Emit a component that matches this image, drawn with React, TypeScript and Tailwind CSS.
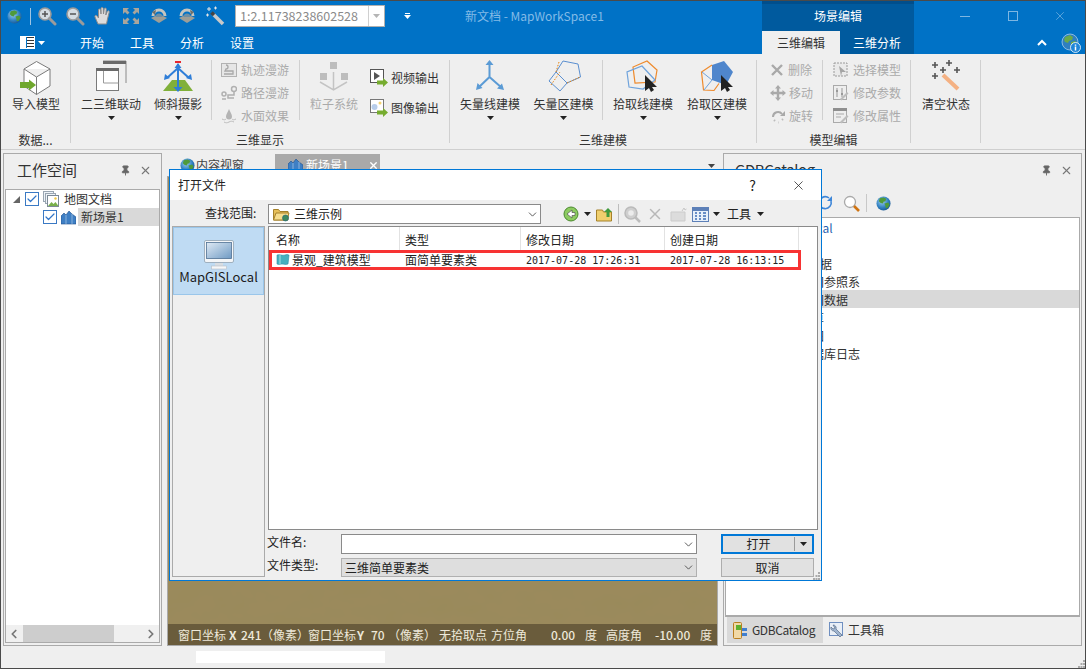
import { Check, ChevronDown, ChevronLeft, ChevronRight, Pin, X } from "lucide-react"
import type { ReactNode } from "react"

const Globe = ({ size = 16, id = "g" }: { size?: number; id?: string }) => (
	<svg width={size} height={size} viewBox="0 0 16 16" className="shrink-0">
		<defs>
			<radialGradient id={id} cx="0.4" cy="0.35" r="0.75">
				<stop offset="0" stopColor="#9fd0f0" />
				<stop offset="0.6" stopColor="#2f7fc0" />
				<stop offset="1" stopColor="#164f86" />
			</radialGradient>
		</defs>
		<circle cx="8" cy="8" r="7.5" fill={`url(#${id})`} />
		<path d="M4 2.5 8 1.5l3 1.5-1 2.5-2 .5-.5 2-2.5-.5-2-2zM9 8l4-1 1.5 2-2 3.5-2 .5-.5-2.5z" fill="#4f9a3a" />
	</svg>
)

const InfoGlobe = () => (
	<svg width="20" height="20" viewBox="0 0 20 20" className="shrink-0">
		<circle cx="9" cy="9" r="8" fill="#2f7fc0" stroke="#d5e6f3" strokeWidth=".6" />
		<path d="M4 4 9 2l3 2-1 3-3 1-1 2-3-1-1-2zM10 9l4-1 2 2-2 3-3 1-1-3z" fill="#6aa84a" />
		<circle cx="14.500" cy="14.500" r="5" fill="#1f86d8" stroke="#fff" strokeWidth=".8" />
		<path d="M14.500 11.500v1.200M14.500 13.500v4" stroke="#fff" strokeWidth="1.500" />
	</svg>
)

const Lens = ({ sign }: { sign: "+" | "-" }) => (
	<svg width="20" height="20" viewBox="0 0 20 20">
		<circle cx="8" cy="8" r="6" fill="#d5dde2" stroke="#9a9a9a" strokeWidth="1.600" />
		<path d="M12.500 12.500 18 18" stroke="#9b9b9b" strokeWidth="3" strokeLinecap="round" />
		<path d={sign === "+" ? "M5 8h6M8 5v6" : "M5 8h6"} stroke="#555" strokeWidth="1.500" />
	</svg>
)

const HandIcon = () => (
	<svg width="20" height="20" viewBox="0 0 20 20">
		<path d="M5 18 2 11c-.6-1.500 1-2.300 2-1l1.500 2V4c0-1.500 2-1.500 2.200 0l.3 4V2.500c0-1.500 2.200-1.500 2.300 0L10.500 8l.7-5c.2-1.400 2.200-1.200 2.100.3L12.800 9l1.500-3.500c.6-1.300 2.300-.7 1.900.7L14.500 13l-1 5z" fill="#dcdcdc" stroke="#8b8b8b" strokeWidth="1" />
	</svg>
)

const ExtentIcon = () => (
	<svg width="16" height="16" viewBox="0 0 16 16" fill="#a9a59c">
		<path d="M0 0h6L4 2l2.500 2.500-2 2L2 4 0 6zM16 0v6l-2-2-2.500 2.500-2-2L12 2l-2-2zM0 16v-6l2 2 2.500-2.500 2 2L4 14l2 2zM16 16h-6l2-2-2.500-2.500 2-2L14 12l2-2z" />
	</svg>
)

const OrbitIcon = ({ flip = false }: { flip?: boolean }) => (
	<svg width="20" height="20" viewBox="0 0 20 20">
		<path d="M2 12 10 8l8 4-8 5z" fill="#9e9e96" />
		<path d="M4 10a6 6 0 0 1 12 0" fill="none" stroke="#c5c5c0" strokeWidth="3" />
		<path d={flip ? "M13 4l4 2-3 3z" : "M7 4 3 6l3 3z"} fill="#6f6f6a" />
		<path d="M6.500 11a3.500 3.500 0 0 1 7 0" fill="#6f8ea3" />
	</svg>
)

const WandIcon = () => (
	<svg width="20" height="20" viewBox="0 0 20 20">
		<path d="M8 8l10 10" stroke="#c9c9c9" strokeWidth="3.500" />
		<path d="M6.500 6.500 9 9" stroke="#444" strokeWidth="3.500" />
		<path d="M2 3h4M4 1v4M9 2h3M10.500.5v3M1 9h3M2.500 7.500v3" stroke="#e6e6e6" strokeWidth="1" />
	</svg>
)

const Caret = ({ cls = "" }: { cls?: string }) => (
	<svg width="7" height="4" viewBox="0 0 7 4" className={`shrink-0 ${cls}`}>
		<path d="M0 0h7L3.500 4z" fill="currentColor" />
	</svg>
)

const Cube = () => (
	<svg width="44" height="36" viewBox="15 60 44 36">
		<path d="M37.500 61.500 51 69v17l-13.500 8.500L25 86V69z M25 69l12.500 8L51 69 M37.500 77v17.500" fill="#fff" stroke="#7a7a7a" strokeWidth="1" />
		<path d="M21 82h9v-2.500l7 5.500-7 5.500V88h-9z" fill="#6fa72d" />
	</svg>
)

const LinkWindows = () => (
	<svg width="34" height="36" viewBox="94 60 34 36">
		<path d="M103 61h23v22" fill="none" stroke="#8a8a8a" />
		<path d="M103 61h23v3h-23z" fill="#6a6a6a" />
		<rect x="96.500" y="68.500" width="22" height="22" fill="#fff" stroke="#7a7a7a" />
		<path d="M96 68h23v3H96z" fill="#6a6a6a" />
		<path d="M103.500 71v12h15" fill="none" stroke="#9a9a9a" />
	</svg>
)

const Oblique = () => (
	<svg width="36" height="36" viewBox="160 60 36 36">
		<path d="M172 80h13l8 11h-30z" fill="#80b03a" />
		<path d="M175 61h6v2h-6z" fill="#e8262e" />
		<path d="M178 64v25M178 68l-11 10M178 68l11 10" stroke="#2f7ed8" strokeWidth="2" fill="none" />
		<path d="M178 63l-3.500 5h7zM178 92l-4.500-5h9zM164 80l1-6 5 4zM192 80l-1-6-5 4z" fill="#2f7ed8" />
	</svg>
)

const Particles = () => (
	<svg width="40" height="36" viewBox="314 60 40 36" fill="#bdbdbd">
		<rect x="330" y="62" width="7" height="7" />
		<rect x="320" y="73" width="7" height="7" />
		<rect x="341" y="73" width="7" height="7" />
		<path d="M333.500 72v17M320 82l13.500 8 13.500-8" fill="none" stroke="#c4c4c4" strokeWidth="1.500" />
	</svg>
)

const VectorLine = () => (
	<svg width="34" height="36" viewBox="474 60 34 36">
		<path d="M490.500 63v14L479 88M490.500 77 503 88" fill="none" stroke="#5b9bd5" strokeWidth="2" />
		<path d="M490.500 60l-4 5h8zM477 90l1.500-7 5 5zM505 90l-7-1.500 5-5z" fill="#5b9bd5" />
	</svg>
)

const VectorArea = () => (
	<svg width="38" height="36" viewBox="545 60 38 36" fill="none">
		<path d="M563 61l15 3 2.500 13-13.500 6-11-11z" stroke="#5b8fd0" />
		<path d="M556 72l-7 9 11 10 7-8" stroke="#5b8fd0" />
		<path d="M559 62l-3 10 M567 83l13-6 M551 85l9-13" stroke="#e8820c" strokeDasharray="1.500 1.500" />
	</svg>
)

const PickLine = () => (
	<svg width="36" height="36" viewBox="627 60 36 36" fill="none">
		<path d="M649 61l10 9-2 12-20 1-2-16z" stroke="#ee8a2c" strokeWidth="1.200" />
		<path d="M644 66l13 14-12 9-14-2-2-15z" stroke="#6fa3dc" strokeWidth="1.200" />
		<path d="M647 75l12 12h-5l2 3-3 2-2-4-4 3z" fill="#222" />
	</svg>
)

const PickArea = () => (
	<svg width="36" height="36" viewBox="699 60 36 36" fill="none">
		<path d="M712 65l12-4 9 11-7 13-14-5z" fill="#4f86cc" />
		<path d="M712 65l-10.500 7 2 18 10.500.5 5-7" stroke="#ee8a2c" strokeWidth="1.200" />
		<path d="M702 72l10 8 -8 10" stroke="#6fa3dc" strokeWidth="1" />
		<path d="M721 75l12 12h-5l2 3-3 2-2-4-4 3z" fill="#222" />
	</svg>
)

const ClearWand = () => (
	<svg width="36" height="36" viewBox="928 60 36 36">
		<path d="M943 75l15 14" stroke="#f4b183" strokeWidth="4" />
		<path d="M932 65h6M935 62v6M946 63h6M949 60v6M940 70h6M943 67v6M954 70h6M957 67v6M932 76h6M935 73v6" stroke="#555" strokeWidth="1.600" />
	</svg>
)

const GrayMap = () => (
	<svg width="16" height="16" viewBox="0 0 16 16">
		<rect x=".5" y="1.500" width="15" height="13" fill="#e6e6e6" stroke="#b2b2b2" />
		<path d="M5 3a2 2 0 1 1 0 4L4 9h8v3H3" fill="none" stroke="#a8a8a8" strokeWidth="1.300" />
	</svg>
)

const GrayRoute = () => (
	<svg width="16" height="16" viewBox="0 0 16 16" fill="none" stroke="#b0b0b0" strokeWidth="1.500">
		<circle cx="3" cy="9" r="2" />
		<circle cx="13" cy="4" r="2.500" />
		<path d="M13 7v3H7v3h6M1 14h4" />
	</svg>
)

const GrayWater = () => (
	<svg width="16" height="16" viewBox="0 0 16 16" fill="#b4b4b4">
		<path d="M8 1c1 3 3 5 3 7.500a3 3 0 0 1-6 0C5 6 7 4 8 1z" />
		<path d="M1 11c2 1 3 1 4 0M11 11c1 1 2 1 4 0M3 14c2 1 3 1 5 0s3-1 5 0" fill="none" stroke="#bcbcbc" />
	</svg>
)

const GreenArrow = () => (
	<path d="M7 11.500h6V9l5 4.500-5 4.500v-2.500H7z" fill="#76ac2f" />
)

const VideoOut = () => (
	<svg width="18" height="18" viewBox="0 0 18 18">
		<rect x=".5" y=".5" width="13" height="13" fill="#fff" stroke="#555" />
		<path d="M4 3l6 4-6 4z" fill="#555" />
		<GreenArrow />
	</svg>
)

const ImageOut = () => (
	<svg width="18" height="18" viewBox="0 0 18 18">
		<rect x=".5" y=".5" width="13" height="13" fill="#fff" stroke="#777" />
		<circle cx="4.500" cy="8" r="3" fill="#b8cdea" />
		<circle cx="10" cy="4" r="1.500" fill="#f3d270" />
		<GreenArrow />
	</svg>
)

const GrayX = () => (
	<svg width="14" height="14" viewBox="0 0 14 14">
		<path d="M2 2l10 10M12 2 2 12" stroke="#a9a9a9" strokeWidth="2.400" />
	</svg>
)

const GrayMove = () => (
	<svg width="16" height="16" viewBox="0 0 16 16" fill="#a9a9a9">
		<path d="M8 0l3 3.500H9.200v3.300h3.300V5L16 8l-3.500 3v-1.800H9.200v3.300H11L8 16l-3-3.500h1.800V9.200H3.500V11L0 8l3.500-3v1.800h3.300V3.500H5z" />
	</svg>
)

const GrayRotate = () => (
	<svg width="16" height="16" viewBox="0 0 16 16" fill="none">
		<path d="M3 9a5 5 0 0 1 9-3" stroke="#a9a9a9" strokeWidth="2" />
		<path d="M10 8h5V3z" fill="#a9a9a9" />
		<path d="M4 12l1 1M8 14.500h.5M12 12l1-1" stroke="#bbb" strokeWidth="2" />
	</svg>
)

const GraySelect = () => (
	<svg width="16" height="16" viewBox="0 0 16 16">
		<rect x="1" y="1" width="13" height="13" fill="#eaeaea" stroke="#9a9a9a" strokeDasharray="2 1" />
		<path d="M6 4l7 6H9l-1 4z" fill="#a5a5a5" />
	</svg>
)

const GrayParams = () => (
	<svg width="16" height="16" viewBox="0 0 16 16">
		<rect x=".5" y=".5" width="13" height="14" fill="#eee" stroke="#aaa" />
		<path d="M4 3v9M9 3v9" stroke="#999" />
		<path d="M3 5h2v2H3zM8 8h2v2H8z" fill="#999" />
		<path d="M7 14l7-7 1.500 1.500-7 7z" fill="#bdbdbd" />
	</svg>
)

const GrayAttrs = () => (
	<svg width="16" height="16" viewBox="0 0 16 16">
		<rect x=".5" y=".5" width="13" height="14" fill="#eee" stroke="#aaa" />
		<path d="M0 0h14v3H0z" fill="#8f8f8f" />
		<path d="M3 6h8M3 9h5" stroke="#aaa" />
		<path d="M7 14l7-7 1.500 1.500-7 7z" fill="#bdbdbd" />
	</svg>
)

const SceneIcon = ({ size = 15 }: { size?: number }) => (
	<svg width={size} height={size} viewBox="0 0 15 15" className="shrink-0">
		<path d="M0 14V6l3-3 2 2 3-4 3 3 4 3v7z" fill="#3f7fc4" stroke="#1f4f8c" strokeWidth=".6" />
		<path d="M5 5v9M11 4v10" stroke="#bcd6f0" strokeWidth=".6" />
	</svg>
)

const DocsIcon = () => (
	<svg width="16" height="16" viewBox="0 0 16 16" className="shrink-0">
		<rect x=".5" y=".5" width="10" height="10" fill="#eef3f8" stroke="#9aa6b2" />
		<rect x="2.500" y="2.500" width="10" height="10" fill="#eef3f8" stroke="#9aa6b2" />
		<rect x="4.500" y="4.500" width="11" height="11" fill="#fff" stroke="#7d8a96" />
		<path d="M5 15l3.500-4 2 2 2-2 3 4z" fill="#79b04a" />
		<circle cx="12.500" cy="7.500" r="1.200" fill="#f2c744" />
	</svg>
)

const Box = ({ on = true }: { on?: boolean }) => (
	<span className="flex h-[14px] w-[14px] shrink-0 items-center justify-center border border-[#3a79c4] bg-white">
		{on && <Check size={12} strokeWidth={2.4} className="text-[#2f74c8]" />}
	</span>
)

const Monitor = () => (
	<svg width="30" height="30" viewBox="0 0 30 30">
		<defs>
			<linearGradient id="screen" x1="0" y1="0" x2="1" y2="1">
				<stop offset="0" stopColor="#dfeaf4" />
				<stop offset="1" stopColor="#6f9ac4" />
			</linearGradient>
		</defs>
		<rect x=".5" y=".5" width="29" height="22" rx="1.500" fill="#f4f6f8" stroke="#9fb0bf" />
		<rect x="2.500" y="2.500" width="25" height="16" fill="url(#screen)" stroke="#4f7193" strokeWidth=".8" />
		<rect x="11" y="23" width="8" height="3" fill="#d8dde2" />
		<rect x="7.500" y="26" width="15" height="3" fill="#f6f7f8" stroke="#b4bdc5" strokeWidth=".6" />
	</svg>
)

const FolderGlobe = () => (
	<svg width="17" height="15" viewBox="0 0 17 15">
		<path d="M.5 13V2.500h5l1.500 2h8V13z" fill="#e6bf58" stroke="#a5812a" />
		<path d="M.5 13 3 6h13l-2 7z" fill="#f6dd8d" stroke="#a5812a" />
		<circle cx="12.500" cy="11" r="3" fill="#3d8a5e" stroke="#1f6080" strokeWidth=".6" />
	</svg>
)

const Flag = () => (
	<svg width="14" height="12" viewBox="0 0 14 12" className="shrink-0">
		<path d="M1 1c3-1 5 1 8 0s3 0 4 0l-1 9c-2 1-4 0-6 0s-3 1-5 0z" fill="#47b0bf" stroke="#2d8ba3" strokeWidth=".6" />
		<path d="M4 1v9" stroke="#a6e0e6" strokeWidth="1" />
	</svg>
)

const NavBack = () => (
	<svg width="16" height="16" viewBox="0 0 16 16">
		<circle cx="8" cy="8" r="7" fill="#8ccb60" stroke="#4b8a2e" />
		<path d="M9 4 4 8l5 4v-2.500h3v-3H9z" fill="#fff" stroke="#555" strokeWidth=".7" />
	</svg>
)

const UpFolder = () => (
	<svg width="17" height="15" viewBox="0 0 17 15">
		<path d="M.5 14V3h6l1 2h8v9z" fill="#f0cf6d" stroke="#a5812a" />
		<path d="M12 1l-4 4h2.500v5h3V5H16z" fill="#3f9a3c" />
	</svg>
)

const DimSearch = () => (
	<svg width="17" height="17" viewBox="0 0 17 17">
		<circle cx="7" cy="7" r="6" fill="#cfcfcf" stroke="#bababa" strokeWidth="1.500" />
		<circle cx="7" cy="7" r="2.800" fill="#ececec" />
		<path d="M11 11l5 5" stroke="#bcbcbc" strokeWidth="2.500" />
	</svg>
)

const DimFolder = () => (
	<svg width="17" height="15" viewBox="0 0 17 15">
		<path d="M1 14V5h14v9z" fill="#dcdcdc" stroke="#cbcbcb" />
		<path d="M12 4l2-3 1 2 1.500-1" fill="none" stroke="#c6c6c6" />
	</svg>
)

const ViewGrid = () => (
	<svg width="17" height="15" viewBox="0 0 17 15">
		<rect x=".5" y=".5" width="16" height="14" fill="#e8f0fa" stroke="#5d80b8" />
		<path d="M1 1h15v3H1z" fill="#5d80b8" />
		<path d="M3 6h2M7 6h2M11 6h3M3 9h2M7 9h2M11 9h3M3 12h2M7 12h2M11 12h3" stroke="#3f6db5" strokeWidth="1.500" />
	</svg>
)

const Refresh = () => (
	<svg width="16" height="16" viewBox="0 0 16 16" fill="none">
		<path d="M14 6a6 6 0 1 1-2-3" stroke="#3d86d8" strokeWidth="1.600" />
		<path d="M10 6h5V1z" fill="#3d86d8" />
	</svg>
)

const Search = () => (
	<svg width="17" height="17" viewBox="0 0 17 17">
		<circle cx="7" cy="7" r="5.500" fill="#fff" stroke="#a9a9a9" strokeWidth="1.300" />
		<path d="M11 11l5 5" stroke="#cf7414" strokeWidth="2.600" />
	</svg>
)

const CatalogIcon = () => (
	<svg width="15" height="17" viewBox="0 0 15 17" className="shrink-0">
		<rect x=".5" y=".5" width="8" height="16" rx="1" fill="#f1d9a6" stroke="#b97f20" />
		<rect x="3" y="3" width="5" height="5" fill="#5fb030" />
		<path d="M9 6h5v3H9zM9 11h5v3H9z" fill="#3f7fd0" />
	</svg>
)

const ToolboxIcon = () => (
	<svg width="15" height="16" viewBox="0 0 15 16" className="shrink-0">
		<rect x=".5" y=".5" width="13" height="13" fill="#e9eff7" stroke="#6f8fc0" />
		<path d="M4 3a3 3 0 0 1 3 4l6 6-2 2-6-6a3 3 0 0 1-3-4l2 2 2-1z" fill="#9fb4cf" stroke="#5a6f8a" strokeWidth=".7" />
	</svg>
)

const Grip = () => (
	<svg width="7" height="8" viewBox="0 0 7 8" fill="#a9a9a9">
		<path d="M5 0h2v2H5zM2.500 3h2v2h-2zM5 3h2v2H5zM0 6h2v2H0zM2.500 6h2v2h-2zM5 6h2v2H5z" />
	</svg>
)

// mottled ground shown in the 3D view
const GroundTexture = () => (
	<svg className="absolute inset-0 h-full w-full" aria-hidden="true">
		<filter id="ground">
			<feTurbulence type="fractalNoise" baseFrequency="0.03 0.05" numOctaves="3" seed="4" />
			<feColorMatrix values="0 0 0 0 0.3  0 0 0 0 0.25  0 0 0 0 0.1  0 0 0 0.55 -0.18" />
		</filter>
		<rect width="100%" height="100%" filter="url(#ground)" />
	</svg>
)

function BigButton({ width, icon, label, arrow = false, dim = false }: { width: string; icon: ReactNode; label: string; arrow?: boolean; dim?: boolean }) {
	return (
		<div className={`flex shrink-0 flex-col items-center ${width}`}>
			<div className="flex h-[37px] items-start justify-center">{icon}</div>
			<span className={`whitespace-nowrap text-[12px] leading-[14px] ${dim ? "text-[#aaaaaa]" : "text-[#333]"}`}>{label}</span>
			{arrow && <Caret cls="mt-[5px] text-[#222]" />}
		</div>
	)
}

function SmallRow({ icon, label, dim = true, iconWidth = "w-[20px]" }: { icon: ReactNode; label: string; dim?: boolean; iconWidth?: string }) {
	return (
		<div className="flex h-[23px] items-center">
			<span className={`flex shrink-0 justify-center ${iconWidth}`}>{icon}</span>
			<span className={`ml-[1px] whitespace-nowrap text-[12px] ${dim ? "text-[#aaaaaa]" : "text-[#333]"}`}>{label}</span>
		</div>
	)
}

const SmallSep = () => <div className="h-[60px] w-px shrink-0 bg-[#d0d0d0]" />

function Group({ width, label, children }: { width: string; label: string; children: ReactNode }) {
	return (
		<div className={`flex h-[83px] shrink-0 flex-col border-r border-[#d0d0d0] ${width}`}>
			<div className="flex h-[73px]">{children}</div>
			<div className="h-[10px] whitespace-nowrap text-center text-[12px] leading-[14px] text-[#333]">{label}</div>
		</div>
	)
}

const quickIcons = [
	<Lens sign="+" key="zi" />,
	<Lens sign="-" key="zo" />,
	<HandIcon key="h" />,
	<ExtentIcon key="e" />,
	<OrbitIcon key="o1" />,
	<OrbitIcon flip key="o2" />,
	<WandIcon key="w" />,
]

const sceneStatus = [
	{ text: "窗口坐标", cls: "w-[51px]" },
	{ text: "X", cls: "w-[12px] font-bold" },
	{ text: "241", cls: "w-[20px] font-medium" },
	{ text: "（像素）", cls: "w-[47px]" },
	{ text: "窗口坐标", cls: "w-[49px]" },
	{ text: "Y", cls: "w-[14px] font-bold" },
	{ text: "70", cls: "w-[17px] font-medium" },
	{ text: "（像素）", cls: "w-[51px]" },
	{ text: "无拾取点", cls: "w-[52px]" },
	{ text: "方位角", cls: "w-[60px]" },
	{ text: "0.00", cls: "w-[34px] font-medium" },
	{ text: "度", cls: "w-[21px]" },
	{ text: "高度角", cls: "w-[49px]" },
	{ text: "-10.00", cls: "w-[45px] font-medium" },
	{ text: "度", cls: "w-[14px]" },
]

const catalogRows = [
	{ text: "MapGISLocal", cls: "pl-[34px] text-[#2a5fb0]" },
	{ text: "", cls: "" },
	{ text: "数据", cls: "pl-[82px] text-[#333]" },
	{ text: "空间参照系", cls: "pl-[74px] text-[#333]" },
	{ text: "空间数据", cls: "pl-[74px] text-[#333] bg-[#d9d9d9]" },
	{ text: "计算", cls: "pl-[74px] text-[#333]" },
	{ text: "视图", cls: "pl-[74px] text-[#333]" },
	{ text: "数据库日志", cls: "pl-[74px] text-[#333]" },
]

export default function App() {
	return (
		<div className="relative flex h-[669px] w-[1086px] flex-col overflow-hidden border border-[#4a4a4a] bg-[#efefef] text-[12px] [font-family:'Noto_Sans_CJK_SC',sans-serif]">
			{/* Title bar */}
			<div className="flex h-[53px] shrink-0 bg-[#0072c6]">
				<div className="flex w-[761px] shrink-0 flex-col">
					<div className="flex h-[30px] items-center">
						<span className="ml-[6px] flex w-[16px]"><Globe size={15} id="qg" /></span>
						<span className="ml-[7px] h-[17px] w-px bg-[#9fc5e3]" />
						<div className="ml-[2px] flex">
							{quickIcons.map((icon, i) => (
								<span key={i} className="flex w-[28px] items-center justify-center">{icon}</span>
							))}
						</div>
						<div className="ml-[6px] flex h-[22px] w-[150px] items-center border border-[#b0b0b0] bg-white">
							<span className="flex-1 pl-[4px] text-[12.5px] text-[#8a8a8a]">1:2.11738238602528</span>
							<span className="flex h-full w-[16px] items-center justify-center border-l border-[#d0d0d0]">
								<Caret cls="text-[#b5b5b5]" />
							</span>
						</div>
						<span className="ml-[19px] flex flex-col items-center text-white">
							<span className="mb-[1px] h-px w-[5px] bg-white" />
							<Caret />
						</span>
						<span className="ml-[54px] text-[12px] text-[#83bbe6]">新文档 - MapWorkSpace1</span>
					</div>
					<div className="flex h-[23px] items-center text-[12px] text-white">
						<span className="ml-[19px] flex h-[13px] w-[15px] border border-white bg-white">
							<span className="w-[5px] bg-white" />
							<span className="w-[8px] border-l border-[#0072c6] bg-[repeating-linear-gradient(#333_0,#333_1px,#fff_1px,#fff_3px)]" />
						</span>
						<Caret cls="ml-[3px] mt-[1px]" />
						<div className="ml-[35px] mt-[1px] flex">
							<span className="w-[50px]">开始</span>
							<span className="w-[50px]">工具</span>
							<span className="w-[50px]">分析</span>
							<span className="w-[50px]">设置</span>
						</div>
					</div>
				</div>
				<div className="flex w-[152px] shrink-0 flex-col bg-[#005a9e]">
					<div className="flex h-[30px] items-center justify-center border-t-[3px] border-[#004e8c] pb-[4px] text-[12px] text-white">场景编辑</div>
					<div className="flex h-[23px] text-[12px]">
						<span className="flex w-[78px] items-center justify-center bg-[#efefef] text-[#333]">三维编辑</span>
						<span className="flex flex-1 items-center justify-center text-white">三维分析</span>
					</div>
				</div>
				<div className="flex flex-1 flex-col">
					<div className="flex h-[30px] items-center text-[#7db6e2]">
						<span className="ml-[46px] h-px w-[10px] bg-[#7db6e2]" />
						<span className="ml-[38px] h-[10px] w-[10px] border border-[#7db6e2]" />
						<X size={14} strokeWidth={1.2} className="ml-[35px]" />
					</div>
					<div className="flex h-[23px] items-center">
						<svg width="10" height="7" viewBox="0 0 10 7" className="ml-[123px]">
							<path d="M1 6l4-4 4 4" fill="none" stroke="#fff" strokeWidth="2" />
						</svg>
						<span className="ml-[14px]"><InfoGlobe /></span>
					</div>
				</div>
			</div>

			{/* Ribbon */}
			<div className="flex h-[96px] shrink-0 border-b border-[#cfcfcf] pt-[6px]">
				<Group width="w-[70px]" label="数据...">
					<BigButton width="w-[70px]" icon={<Cube />} label="导入模型" />
				</Group>
				<Group width="w-[379px]" label="三维显示">
					<BigButton width="w-[80px]" icon={<LinkWindows />} label="二三维联动" arrow />
					<BigButton width="w-[60px] pr-[6px]" icon={<Oblique />} label="倾斜摄影" arrow />
					<SmallSep />
					<div className="-mt-[2px] ml-[9px] w-[78px]">
						<SmallRow icon={<GrayMap />} label="轨迹漫游" iconWidth="w-[16px] mr-[3px]" />
						<SmallRow icon={<GrayRoute />} label="路径漫游" iconWidth="w-[16px] mr-[3px]" />
						<SmallRow icon={<GrayWater />} label="水面效果" iconWidth="w-[16px] mr-[3px]" />
					</div>
					<SmallSep />
					<BigButton width="w-[68px]" icon={<Particles />} label="粒子系统" dim />
					<div className="ml-[2px] mt-[6px] flex flex-col gap-[7px]">
						<SmallRow icon={<VideoOut />} label="视频输出" dim={false} iconWidth="w-[18px] mr-[2px]" />
						<SmallRow icon={<ImageOut />} label="图像输出" dim={false} iconWidth="w-[18px] mr-[2px]" />
					</div>
				</Group>
				<Group width="w-[307px]" label="三维建模">
					<BigButton width="w-[80px]" icon={<VectorLine />} label="矢量线建模" arrow />
					<BigButton width="w-[72px] pr-[5px]" icon={<VectorArea />} label="矢量区建模" arrow />
					<SmallSep />
					<BigButton width="w-[80px]" icon={<PickLine />} label="拾取线建模" arrow />
					<BigButton width="w-[68px]" icon={<PickArea />} label="拾取区建模" arrow />
				</Group>
				<Group width="w-[154px]" label="模型编辑">
					<div className="-mt-[2px] ml-[13px] w-[52px]">
						<SmallRow icon={<GrayX />} label="删除" iconWidth="w-[14px] mr-[3px]" />
						<SmallRow icon={<GrayMove />} label="移动" iconWidth="w-[16px] mr-[2px]" />
						<SmallRow icon={<GrayRotate />} label="旋转" iconWidth="w-[16px] mr-[2px]" />
					</div>
					<SmallSep />
					<div className="-mt-[2px] ml-[10px]">
						<SmallRow icon={<GraySelect />} label="选择模型" iconWidth="w-[16px] mr-[3px]" />
						<SmallRow icon={<GrayParams />} label="修改参数" iconWidth="w-[16px] mr-[3px]" />
						<SmallRow icon={<GrayAttrs />} label="修改属性" iconWidth="w-[16px] mr-[3px]" />
					</div>
				</Group>
				<Group width="w-[70px]" label="">
					<BigButton width="w-[70px]" icon={<ClearWand />} label="清空状态" />
				</Group>
			</div>

			{/* Docked panels */}
			<div className="flex h-[497px] shrink-0 pb-[1px] pl-[2px] pt-[3px]">
				<div className="flex w-[159px] shrink-0 flex-col border border-[#aaaaaa] px-px pb-[2px]">
					<div className="flex h-[35px] shrink-0 items-center pb-[2px] pl-[12px] text-[15px] text-[#333]">
						<span className="flex-1">工作空间</span>
						<Pin size={11} fill="#666" className="mr-[8px] text-[#666]" />
						<X size={13} strokeWidth={2} className="mr-[8px] text-[#777]" />
					</div>
					<div className="flex flex-1 flex-col border border-[#aaaaaa] bg-white">
						<div className="flex-1">
							<div className="flex h-[18px] items-center">
								<svg width="7" height="7" viewBox="0 0 7 7" className="ml-[7px]">
									<path d="M7 0v7H0z" fill="#666" />
								</svg>
								<span className="ml-[5px]"><Box /></span>
								<span className="ml-[4px]"><DocsIcon /></span>
								<span className="ml-[5px] text-[#333]">地图文档</span>
							</div>
							<div className="flex h-[18px] items-center">
								<span className="ml-[37px]"><Box /></span>
								<span className="ml-[4px]"><SceneIcon /></span>
								<span className="ml-[2px] flex h-full flex-1 items-center bg-[#d9d9d9] pl-[3px] text-[#333]">新场景1</span>
							</div>
						</div>
						<div className="flex h-[17px] items-center bg-[#f0f0f0] text-[#777]">
							<ChevronLeft size={14} strokeWidth={3} className="ml-[1px]" />
							<span className="ml-[2px] h-full w-[91px] bg-[#cdcdcd]" />
							<span className="flex-1" />
							<ChevronRight size={14} strokeWidth={3} className="mr-[1px]" />
						</div>
					</div>
				</div>

				<div className="ml-[5px] flex w-[551px] shrink-0 flex-col">
					<div className="flex h-[23px] shrink-0 items-start pl-[8px] pt-[1px]">
						<div className="flex h-[22px] w-[70px] items-center gap-[1px] pl-[5px] text-[#444]">
							<Globe size={15} id="tg" />
							<span className="whitespace-nowrap">内容视窗</span>
						</div>
						<div className="ml-[30px] flex h-[22px] w-[105px] items-center bg-[#a9a9a9] pl-[13px] text-white">
							<SceneIcon />
							<span className="ml-[3px]">新场景1</span>
							<X size={11} strokeWidth={3} className="ml-[19px]" />
						</div>
						<Caret cls="ml-[328px] mt-[10px] text-[#444]" />
					</div>
					<div className="relative flex flex-1 flex-col justify-end border border-[#aaaaaa] bg-[#9b8a5c]">
						<GroundTexture />
						<div className="relative flex h-[21px] items-center whitespace-nowrap bg-[#6a5c3c] pl-[10px] text-[#eee9da]">
							{sceneStatus.map((s, i) => (
								<span key={i} className={`shrink-0 ${s.cls}`}>{s.text}</span>
							))}
						</div>
					</div>
				</div>

				<div className="ml-[5px] flex w-[359px] shrink-0 flex-col border border-[#aaaaaa] pb-[2px]">
					<div className="flex h-[35px] shrink-0 items-center pb-[2px] pl-[11px] text-[15px] text-[#333]">
						<span className="flex-1 tracking-[-0.4px]">GDBCatalog</span>
						<Pin size={11} fill="#666" className="mr-[8px] text-[#666]" />
						<X size={13} strokeWidth={2} className="mr-[8px] text-[#777]" />
					</div>
					<div className="flex h-[28px] shrink-0 items-center pl-[93px]">
						<Refresh />
						<span className="ml-[10px]"><Search /></span>
						<span className="ml-[6px] h-[18px] w-px bg-[#c8c8c8]" />
						<span className="ml-[9px]"><Globe size={15} id="cg" /></span>
					</div>
					<div className="ml-px mr-px flex-1 overflow-hidden border border-b-2 border-[#aaaaaa] bg-white">
						{catalogRows.map((row, i) => (
							<div key={i} className={`h-[18px] whitespace-nowrap leading-[20px] ${row.cls}`}>{row.text}</div>
						))}
					</div>
					<div className="flex h-[26px] shrink-0 items-stretch pl-[3px] text-[#333]">
						<div className="flex w-[96px] items-center bg-[#d9d9d9] pl-[6px]">
							<CatalogIcon />
							<span className="ml-[4px] tracking-[-0.4px]">GDBCatalog</span>
						</div>
						<div className="ml-[6px] flex items-center">
							<ToolboxIcon />
							<span className="ml-[4px]">工具箱</span>
						</div>
					</div>
				</div>
			</div>

			{/* Status bar */}
			<div className="relative flex-1 pl-[195px] pt-[4px]">
				<div className="h-[12px] w-[189px] bg-white" />
				<span className="absolute bottom-0 right-0"><Grip /></span>
			</div>

			{/* Open file dialog */}
			<div className="absolute left-[168px] top-[168px] flex h-[412px] w-[653px] flex-col border border-[#0078d7] bg-[#efefef] text-[#222]">
				<div className="flex h-[30px] shrink-0 items-center bg-white pl-[8px]">
					<span className="flex-1">打开文件</span>
					<span className="text-[14px]">?</span>
					<X size={15} strokeWidth={1.2} className="ml-[35px] mr-[15px] text-[#222]" />
				</div>
				<div className="flex h-[26px] shrink-0 items-start pt-[4px]">
					<span className="ml-[35px] w-[63px] pt-[1px] leading-[16px]">查找范围:</span>
					<div className="flex h-[20px] w-[273px] items-center border border-[#8a8a8a] bg-white pl-[4px]">
						<FolderGlobe />
						<span className="ml-[4px] flex-1">三维示例</span>
						<ChevronDown size={13} strokeWidth={1.6} className="mr-[1px] text-[#444]" />
					</div>
					<div className="ml-[22px] flex h-[20px] items-center text-[#222]">
						<NavBack />
						<Caret cls="ml-[5px]" />
						<span className="ml-[5px]"><UpFolder /></span>
						<span className="ml-[5px] h-[20px] w-px bg-[#bdbdbd]" />
						<span className="ml-[5px]"><DimSearch /></span>
						<X size={18} strokeWidth={2} className="ml-[5px] text-[#b8b8b8]" />
						<span className="ml-[6px]"><DimFolder /></span>
						<span className="ml-[5px]"><ViewGrid /></span>
						<Caret cls="ml-[4px]" />
						<span className="ml-[7px]">工具</span>
						<Caret cls="ml-[6px]" />
					</div>
				</div>
				<div className="flex flex-1">
					<div className="mb-[3px] ml-[2px] w-[93px] shrink-0 border border-[#aaaaaa]">
						<div className="flex h-[68px] flex-col items-center border border-[#9ac6ea] bg-[#bfdbf3] pt-[12px]">
							<Monitor />
							<span className="-mt-[1px] text-[13px] leading-[16px] text-[#1c1c1c]">MapGISLocal</span>
						</div>
					</div>
					<div className="relative ml-[3px] flex w-[550px] flex-col">
						<div className="flex h-[304px] flex-col border border-[#8a8a8a] bg-white">
							<div className="flex h-[23px] shrink-0 items-center">
								<span className="h-full w-[131px] border-r border-[#e2e2e2] pl-[7px] leading-[26px]">名称</span>
								<span className="h-full w-[121px] border-r border-[#e2e2e2] pl-[5px] leading-[26px]">类型</span>
								<span className="h-full w-[144px] border-r border-[#e2e2e2] pl-[5px] leading-[26px]">修改日期</span>
								<span className="h-full w-[134px] border-r border-[#e2e2e2] pl-[5px] leading-[26px]">创建日期</span>
							</div>
							<div className="flex h-[20px] w-[532px] shrink-0 items-center border-[3px] border-[#f73333]">
								<span className="flex w-[128px] items-center whitespace-nowrap pl-[4px]">
									<Flag />
									<span className="ml-[2px]">景观_建筑模型</span>
								</span>
								<span className="w-[121px] pl-[5px]">面简单要素类</span>
								<span className="w-[144px] whitespace-nowrap pl-[5px] text-[10px] [font-family:'DejaVu_Sans_Mono',monospace]">2017-07-28 17:26:31</span>
								<span className="whitespace-nowrap pl-[5px] text-[10px] [font-family:'DejaVu_Sans_Mono',monospace]">2017-07-28 16:13:15</span>
							</div>
						</div>
						<div className="mt-[4px] flex h-[20px] items-center">
							<span className="ml-[-1px] w-[74px] shrink-0 pb-[4px]">文件名:</span>
							<div className="flex h-[20px] w-[356px] shrink-0 items-center justify-end border border-[#8a8a8a] bg-white pr-[1px]">
								<ChevronDown size={13} strokeWidth={1.6} className="text-[#444]" />
							</div>
							<div className="ml-[24px] flex h-[20px] w-[93px] shrink-0 items-center border-[2px] border-[#0078d7] bg-[#e1e1e1]">
								<span className="flex-1 text-center">打开</span>
								<span className="flex h-[14px] w-[18px] items-center justify-center border-l border-[#9a9a9a]">
									<Caret />
								</span>
							</div>
						</div>
						<div className="mt-[4px] flex h-[19px] items-center">
							<span className="ml-[-1px] w-[74px] shrink-0 pb-[6px]">文件类型:</span>
							<div className="flex h-[19px] w-[356px] shrink-0 items-center border border-[#b0b0b0] bg-[#dedede] pl-[3px]">
								<span className="flex-1">三维简单要素类</span>
								<ChevronDown size={13} strokeWidth={1.6} className="mr-[1px] text-[#444]" />
							</div>
							<div className="ml-[24px] flex h-[19px] w-[93px] shrink-0 items-center justify-center border border-[#adadad] bg-[#e1e1e1]">取消</div>
						</div>
						<span className="absolute bottom-0 right-[-2px]"><Grip /></span>
					</div>
				</div>
			</div>
		</div>
	)
}
